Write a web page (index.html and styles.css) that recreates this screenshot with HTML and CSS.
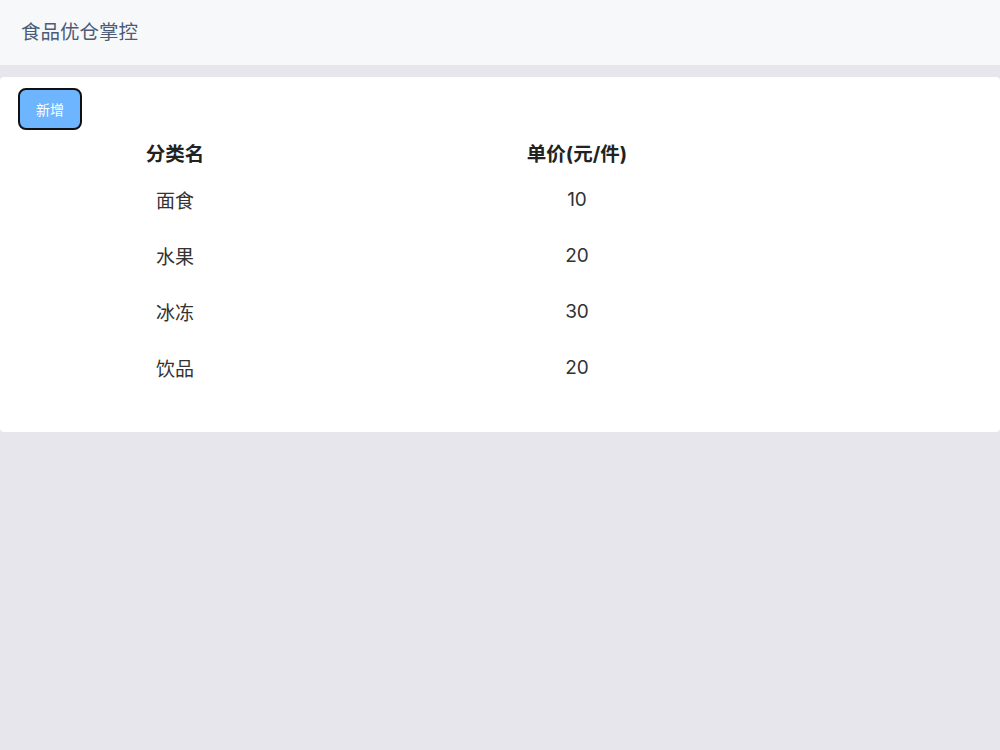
FILE: index.html
```html
<!DOCTYPE html>
<html lang="zh-CN">
<head>
  <meta charset="UTF-8" />
  <title>食品优仓掌控</title>
  <meta name="viewport" content="width=device-width, initial-scale=1.0" />
  <link rel="stylesheet" href="styles.css">
</head>
<body>
  <header class="topbar">
    <h1>食品优仓掌控</h1>
  </header>

  <div class="panel">
    <button class="add-btn">新增</button>

    <!-- 分类列表 -->
    <table class="category-table">
      <thead>
        <tr>
          <th class="col-name">分类名</th>
          <th class="col-price">单价(元/件)</th>
        </tr>
      </thead>
      <tbody>
        <tr><td>面食</td><td>10</td></tr>
        <tr><td>水果</td><td>20</td></tr>
        <tr><td>冰冻</td><td>30</td></tr>
        <tr><td>饮品</td><td>20</td></tr>
      </tbody>
    </table>
  </div>
</body>
</html>
```

FILE: styles.css
```css
* {
  margin: 0;
  padding: 0;
  box-sizing: border-box;
  font-family: Inter, "Noto Sans CJK SC", sans-serif;
}

html, body {
  height: 100%;
}

body {
  background-color: #e8e6ed;
  color: #333;
}

.topbar {
  height: 65px;
  background-color: #f7f8fa;
  display: flex;
  align-items: center;
  padding: 0 21px 4px;
  margin-bottom: 12px;
}

.topbar h1 {
  font-size: 19.5px;
  font-weight: 400;
  color: #4d5b76;
}

.panel {
  background: white;
  border-radius: 4px;
  padding: 11px 18px 35px;
}

.add-btn {
  width: 64px;
  height: 42px;
  background-color: #6db5ff;
  color: white;
  border: 2px solid #111;
  border-radius: 8px;
  font-size: 14px;
  cursor: pointer;
}

.category-table {
  border-collapse: collapse;
  margin-top: 3px;
}

.category-table th,
.category-table td {
  text-align: center;
  font-size: 19px;
}

.category-table th {
  height: 40px;
  font-size: 19.5px;
  font-weight: 700;
  color: #222;
  padding-bottom: 2px;
}

.category-table td {
  height: 56px;
  font-weight: 400;
  color: #333;
  padding-bottom: 3px;
}

.col-name {
  width: 314px;
}

.col-price {
  width: 490px;
}
```
